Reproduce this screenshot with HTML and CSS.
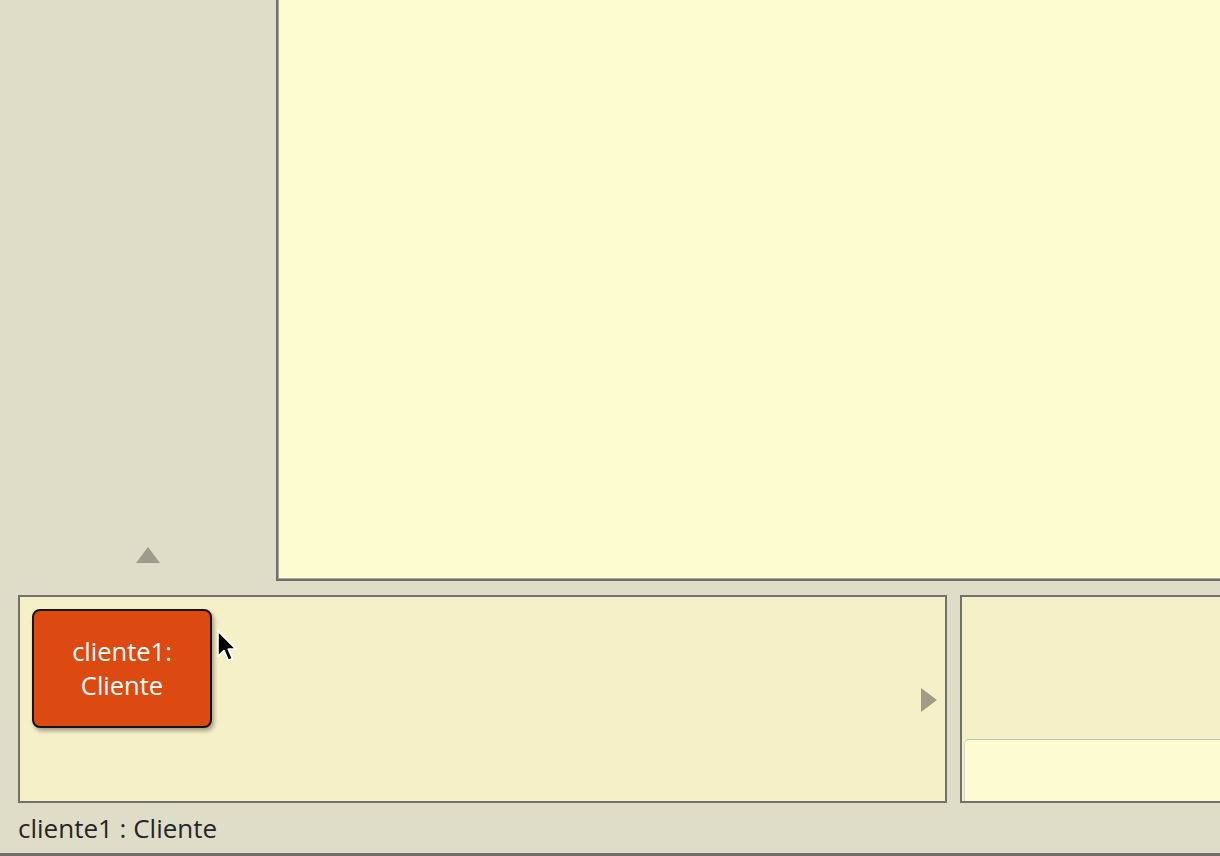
FILE: index.html
```html
<!DOCTYPE html>
<html>
<head>
<meta charset="utf-8">
<link rel="stylesheet" href="styles.css">
</head>
<body>
<div class="app">
  <div class="top">
    <aside class="sidebar">
      <span class="tri-up"></span>
    </aside>
    <main class="canvas"></main>
  </div>
  <div class="bottom">
    <section class="bench">
      <div class="card">cliente1:<br>Cliente</div>
      <svg class="cursor" width="24" height="38" viewBox="0 0 20 32">
        <path d="M1.5 1.5 L1.5 23 L6.6 18.2 L10.2 26.5 L13.8 25 L10.3 17 L16.8 17 Z" fill="#000" stroke="#fff" stroke-width="1.5" stroke-linejoin="round"/>
      </svg>
      <span class="tri-right"></span>
    </section>
    <section class="inspector">
      <div class="inspector-top"></div>
      <div class="inspector-bottom"></div>
    </section>
  </div>
  <div class="status">cliente1 : Cliente</div>
</div>
</body>
</html>
```
FILE: styles.css
```css
html, body {
  margin: 0;
  padding: 0;
}
body {
  width: 1220px;
  height: 856px;
  overflow: hidden;
  background: #dfddc8;
  font-family: "Open Sans", "Liberation Sans", Arial, sans-serif;
}
.app {
  display: flex;
  flex-direction: column;
  height: 856px;
  box-sizing: border-box;
  border-bottom: 3px solid #707070;
}
.top {
  display: flex;
  height: 581px;
  flex: none;
}
.sidebar {
  width: 276px;
  flex: none;
  display: flex;
  align-items: flex-end;
  justify-content: center;
  padding-bottom: 18px;
  box-sizing: border-box;
}
.tri-up {
  width: 0;
  height: 0;
  border-left: 12px solid transparent;
  border-right: 12px solid transparent;
  border-bottom: 16px solid #9c9b8c;
  margin-left: 20px;
}
.canvas {
  flex: 1;
  background: #fdfbd0;
  border-left: 2px solid #6e6e6e;
  border-bottom: 2px solid #6e6e6e;
  box-shadow: inset 1px 0 0 #a8a8a0, inset 0 -1px 0 #a8a8a0;
}
.bottom {
  display: flex;
  gap: 13px;
  margin-top: 14px;
  padding-left: 18px;
  height: 208px;
  flex: none;
}
.bench {
  position: relative;
  width: 929px;
  flex: none;
  box-sizing: border-box;
  background: #f6f0c9;
  border: 2px solid #717171;
  padding: 12px 0 0 12px;
}
.card {
  width: 180px;
  height: 119px;
  box-sizing: border-box;
  background: #dc4a12;
  border: 2px solid #151515;
  border-radius: 8px;
  box-shadow: 2px 3px 4px rgba(0,0,0,0.35);
  color: #fff;
  font-size: 25.5px;
  line-height: 34px;
  text-align: center;
  display: flex;
  align-items: center;
  justify-content: center;
  padding-bottom: 2px;
}
.cursor {
  position: absolute;
  left: 196px;
  top: 32px;
}
.tri-right {
  position: absolute;
  right: 8px;
  top: 91px;
  width: 0;
  height: 0;
  border-top: 12px solid transparent;
  border-bottom: 12px solid transparent;
  border-left: 16px solid #9c9b8c;
}
.inspector {
  flex: 1;
  display: flex;
  flex-direction: column;
  box-sizing: border-box;
  background: #f6f0c9;
  border: 2px solid #717171;
  border-right: none;
}
.inspector-top {
  height: 142px;
  flex: none;
}
.inspector-bottom {
  flex: 1;
  margin-left: 2px;
  background: #fdfbd2;
  border-top: 1px solid #c4c2b4;
  border-left: 1px solid #d8d6c8;
  border-top-left-radius: 5px;
}
.status {
  padding-left: 18px;
  padding-top: 9px;
  font-size: 26px;
  line-height: 32px;
  color: #262626;
}
```
